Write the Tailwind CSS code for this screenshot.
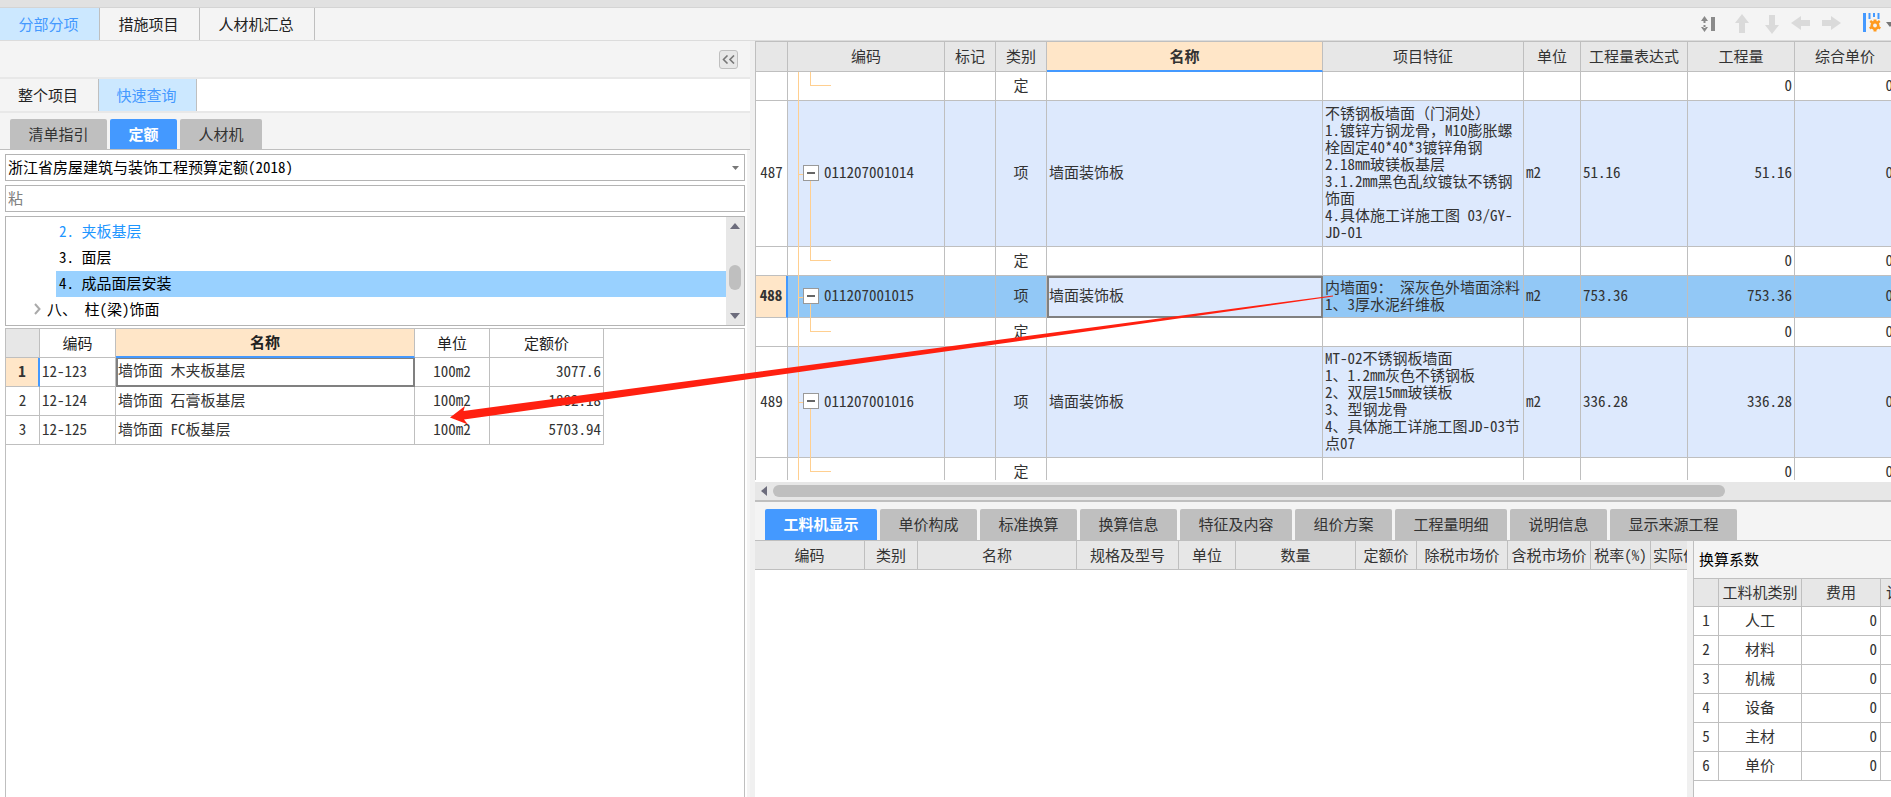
<!DOCTYPE html>
<html lang="zh-CN">
<head>
<meta charset="utf-8">
<title>分部分项 - 定额查询</title>
<script src="https://cdn.jsdelivr.net/npm/@tailwindcss/browser@4"></script>
</head>
<body class="relative flex h-screen flex-col overflow-hidden bg-white font-['Noto_Sans_CJK_SC',sans-serif] text-[15px] leading-[17px] text-[#333] [font-feature-settings:'hwid']">

<header class="shrink-0">
  <div class="h-[8px] border-b border-[#d4d4d4] bg-[#e1e1e1]"></div>
  <div class="flex h-[33px] items-stretch justify-between border-b border-[#dcdcdc] bg-[#f4f4f4]">
    <nav class="flex [&>button]:pr-[2px] [&>button]:pb-[2px]">
      <button class="w-[100px] border-r border-[#bfbfbf] bg-[#cce8ff] text-[#4499ff]">分部分项</button>
      <button class="w-[100px] border-r border-[#bfbfbf] text-[#222]">措施项目</button>
      <button class="w-[115px] border-r border-[#bfbfbf] text-[#222]">人材机汇总</button>
    </nav>
    <div class="flex items-center text-[#dadada]">
      <button aria-label="行高" class="mr-[19px]"><svg width="15" height="18" viewBox="0 0 15 18"><path d="M3.500 1 L7 6 H0Z M3.500 17 L7 12 H0Z M2.500 5h2v3h-2z M2.500 10h2v3h-2z M10 2h4v14h-4z" fill="#8a8a8a"/></svg></button>
      <button aria-label="上移" class="mr-[16px]"><svg width="14" height="20" viewBox="0 0 14 20"><path d="M7 0L14 9H10V19H4V9H0Z" fill="currentColor"/></svg></button>
      <button aria-label="下移" class="mr-[12px]"><svg width="14" height="20" viewBox="0 0 14 20"><path d="M7 20L0 11H4V1H10V11H14Z" fill="currentColor"/></svg></button>
      <button aria-label="左移" class="mr-[12px]"><svg width="19" height="16" viewBox="0 0 19 16"><path d="M0 7L10 0V4H19V10H10V14Z" fill="currentColor"/></svg></button>
      <button aria-label="右移" class="mr-[22px]"><svg width="19" height="16" viewBox="0 0 19 16"><path d="M19 7L9 0V4H0V10H9V14Z" fill="currentColor"/></svg></button>
      <button aria-label="列设置" class="mr-[5px] pb-[2px]"><svg width="18" height="20" viewBox="0 0 18 20"><path d="M0 0h3v19H0z M5.500 0h2v6h-2z M10 0h2v4h-2z M14.500 0h2v6h-2z" fill="#4499ff"/><g fill="#ff9a1f"><circle cx="12" cy="12.500" r="4.500"/><path d="M10.500 6.500h3v12h-3z M6.500 9l1.500-2 10 7.500-1.500 2z M17.500 9L16 7 6 14.500l1.500 2z"/></g><circle cx="12" cy="12.500" r="1.900" fill="#f4f4f4"/></svg></button>
      <button aria-label="更多" class="w-[5px] overflow-hidden"><svg class="max-w-none" width="8" height="5" viewBox="0 0 8 5"><path d="M0 0H8L4 5Z" fill="#777"/></svg></button>
    </div>
  </div>
</header>

<div class="flex min-h-0 flex-1">

  <aside class="flex w-[750px] shrink-0 flex-col">
    <div class="flex h-[38px] shrink-0 items-center justify-end border-b-2 border-[#e8e8e8] bg-[#f4f4f4] pr-[12px]">
      <button aria-label="收起" class="flex size-[19px] items-center justify-center rounded-[3px] border border-[#bfbfbf] bg-[#e7e7e7]"><svg width="13" height="9" viewBox="0 0 13 9" fill="none" stroke="#777" stroke-width="1.600"><path d="M5.500 .5L1.500 4.500l4 4M12 .5L8 4.500l4 4"/></svg></button>
    </div>
    <nav class="flex h-[34px] shrink-0 border-b-2 border-[#e8e8e8] [&>button]:pr-[2px] [&>button]:pb-[2px]">
      <button class="w-[99px] border-r border-[#bfbfbf] bg-[#f4f4f4] text-[#222]">整个项目</button>
      <button class="w-[98px] border-r border-[#bfbfbf] bg-[#cce8ff] text-[#4499ff]">快速查询</button>
    </nav>
    <nav class="flex h-[37px] shrink-0 items-end gap-[3px] border-b border-[#bfbfbf] bg-[#f4f4f4] pl-[10px] [&>button]:pb-[2px]">
      <button class="h-[30px] w-[97px] rounded-t-[2px] bg-[#bfbfbf]">清单指引</button>
      <button class="h-[30px] w-[67px] rounded-t-[2px] bg-[#4499ff] font-bold text-white">定额</button>
      <button class="h-[30px] w-[82px] rounded-t-[2px] bg-[#bfbfbf]">人材机</button>
    </nav>

    <div class="flex min-h-0 flex-1 bg-[#f4f4f4]">
      <div class="flex w-[747px] flex-col bg-white pt-[4px] pr-[2px] pl-[5px]">
        <div class="relative mb-[4px] flex shrink-0">
          <select aria-label="定额库" class="h-[27px] w-full appearance-none border border-[#b4b4b4] bg-white pb-[2px] pl-[2px] text-black"><option>浙江省房屋建筑与装饰工程预算定额(2018)</option></select>
          <svg class="pointer-events-none absolute top-[12px] right-[6px]" width="7" height="4" viewBox="0 0 7 4"><path d="M0 0H7L3.500 4Z" fill="#777"/></svg>
        </div>
        <input aria-label="搜索" value="粘" class="mb-[4px] h-[27px] shrink-0 border border-[#b4b4b4] pb-[2px] pl-[2px] text-[#808080]">

        <div class="flex h-[110px] shrink-0 border border-[#b4b4b4]">
          <ul class="flex-1 pt-[2px] text-black [&>li]:pb-[3px]">
            <li class="flex h-[26px] items-center pl-[53px] text-[#1e96ff]"><span class="whitespace-pre">2. 夹板基层</span></li>
            <li class="flex h-[26px] items-center pl-[53px]"><span class="whitespace-pre">3. 面层</span></li>
            <li class="ml-[50px] flex h-[26px] items-center bg-[#99d1ff] pl-[3px]"><span class="whitespace-pre">4. 成品面层安装</span></li>
            <li class="flex h-[26px] items-center gap-[6px] pl-[28px]"><svg width="7" height="12" viewBox="0 0 7 12" fill="none" stroke="#aaa" stroke-width="2"><path d="M1 1l4.500 5L1 11"/></svg><span>八、 柱(梁)饰面</span></li>
          </ul>
          <div class="flex w-[18px] flex-col items-center bg-[#e7e7e7] pt-[6px] pb-[6px]">
            <svg width="10" height="6" viewBox="0 0 10 6"><path d="M0 6L5 0l5 6Z" fill="#6c6c7c"/></svg>
            <div class="mt-[36px] h-[25px] w-[12px] rounded-full bg-[#bfbfbf]"></div>
            <svg class="mt-auto" width="10" height="6" viewBox="0 0 10 6"><path d="M0 0h10L5 6Z" fill="#6c6c7c"/></svg>
          </div>
        </div>

        <div class="mt-[2px] min-h-0 flex-1 border-x border-t border-[#bfbfbf]">
          <table class="w-[598px] table-fixed border-separate border-spacing-0 [&_td]:border-r [&_td]:border-b [&_td]:border-[#bfbfbf] [&_td]:px-[2px] [&_td]:pb-[4px] [&_th]:border-r [&_th]:border-b [&_th]:border-[#bfbfbf] [&_th]:pb-[2px]">
            <colgroup><col class="w-[34px]"><col class="w-[76px]"><col class="w-[299px]"><col class="w-[75px]"><col class="w-[114px]"></colgroup>
            <thead>
              <tr class="h-[29px] font-normal text-[#222]"><th class="bg-[#e7e7e7]"></th><th class="font-normal">编码</th><th class="border-b-2! border-b-[#4499ff]! bg-[#ffe6c8] font-bold">名称</th><th class="font-normal">单位</th><th class="font-normal">定额价</th></tr>
            </thead>
            <tbody>
              <tr class="h-[29px]"><td class="border-r-2! border-r-[#4499ff]! bg-[#ffe6c8] text-center font-bold">1</td><td>12-123</td><td class="border-r-2! border-b-2! border-[#808080]! shadow-[inset_2px_1px_0_#808080]">墙饰面 木夹板基层</td><td class="text-center">100m2</td><td class="text-right">3077.6</td></tr>
              <tr class="h-[29px]"><td class="text-center">2</td><td>12-124</td><td>墙饰面 石膏板基层</td><td class="text-center">100m2</td><td class="text-right">1882.18</td></tr>
              <tr class="h-[29px]"><td class="text-center">3</td><td>12-125</td><td>墙饰面 FC板基层</td><td class="text-center">100m2</td><td class="text-right">5703.94</td></tr>
            </tbody>
          </table>
        </div>
      </div>
    </div>
  </aside>

  <div class="w-[5px] shrink-0 bg-[#f0f0f0]"></div>

  <main class="flex min-w-0 flex-1 flex-col">
    <div class="h-[439px] shrink-0 overflow-hidden border-t border-l border-[#bfbfbf]">
      <table class="w-[1140px] table-fixed border-separate border-spacing-0 [&_td]:border-r [&_td]:border-b [&_td]:border-[#bfbfbf] [&_td]:px-[2px] [&_td]:pb-[4px] [&_th]:border-r [&_th]:border-b [&_th]:border-[#bfbfbf] [&_th]:pb-[2px]">
        <colgroup><col class="w-[32px]"><col class="w-[157px]"><col class="w-[51px]"><col class="w-[51px]"><col class="w-[276px]"><col class="w-[201px]"><col class="w-[57px]"><col class="w-[107px]"><col class="w-[107px]"><col class="w-[101px]"></colgroup>
        <thead>
          <tr class="h-[30px] bg-[#e7e7e7]"><th></th><th class="font-normal">编码</th><th class="font-normal">标记</th><th class="font-normal">类别</th><th class="border-b-2! border-b-[#4499ff]! bg-[#ffe6c8] font-bold">名称</th><th class="font-normal">项目特征</th><th class="font-normal">单位</th><th class="font-normal">工程量表达式</th><th class="font-normal">工程量</th><th class="font-normal">综合单价</th></tr>
        </thead>
        <tbody>
          <tr class="h-[29px]"><td></td>
            <td class="relative"><i class="absolute top-0 -bottom-px left-[10px] w-px bg-[#ffcf90]"></i><i class="absolute top-0 bottom-1/2 left-[22px] w-[21px] border-b border-l border-[#ffcf90]"></i></td>
            <td></td><td class="text-center">定</td><td></td><td></td><td></td><td></td><td class="text-right">0</td><td class="text-right">0</td></tr>
          <tr class="h-[146px] bg-[#dde9fd]"><td class="bg-white text-center">487</td>
            <td class="relative pb-[2px]!"><i class="absolute top-0 -bottom-px left-[10px] w-px bg-[#ffcf90]"></i><i class="absolute top-1/2 left-[11px] h-px w-[5px] bg-[#ffcf90]"></i><i class="absolute top-1/2 -bottom-px left-[22px] w-px bg-[#ffcf90]"></i><div class="relative flex items-center gap-[5px] pl-[13px]"><button aria-label="折叠" class="flex size-[16px] items-center justify-center border border-[#999] bg-white"><span class="h-[2px] w-[8px] bg-[#666]"></span></button><span class="pb-[2px]">011207001014</span></div></td>
            <td></td><td class="text-center">项</td><td>墙面装饰板</td>
            <td class="whitespace-nowrap">不锈钢板墙面<span class="[font-feature-settings:normal]">（门洞处）</span><br>1.镀锌方钢龙骨<span class="[font-feature-settings:normal]">，</span>M10膨胀螺<br>栓固定40*40*3镀锌角钢<br>2.18mm玻镁板基层<br>3.1.2mm黑色乱纹镀钛不锈钢<br>饰面<br>4.具体施工详施工图 03/GY-<br>JD-01</td>
            <td>m2</td><td>51.16</td><td class="text-right">51.16</td><td class="text-right">0</td></tr>
          <tr class="h-[29px]"><td></td>
            <td class="relative"><i class="absolute top-0 -bottom-px left-[10px] w-px bg-[#ffcf90]"></i><i class="absolute top-0 bottom-1/2 left-[22px] w-[21px] border-b border-l border-[#ffcf90]"></i></td>
            <td></td><td class="text-center">定</td><td></td><td></td><td></td><td></td><td class="text-right">0</td><td class="text-right">0</td></tr>
          <tr class="h-[42px] bg-[#92c8f6]"><td class="border-r-2! border-r-[#4499ff]! bg-[#ffe6c8] text-center font-bold">488</td>
            <td class="relative pb-[2px]!"><i class="absolute top-0 -bottom-px left-[10px] w-px bg-[#ffcf90]"></i><i class="absolute top-1/2 left-[11px] h-px w-[5px] bg-[#ffcf90]"></i><i class="absolute top-1/2 -bottom-px left-[22px] w-px bg-[#ffcf90]"></i><div class="relative flex items-center gap-[5px] pl-[13px]"><button aria-label="折叠" class="flex size-[16px] items-center justify-center border border-[#999] bg-white"><span class="h-[2px] w-[8px] bg-[#666]"></span></button><span class="pb-[2px]">011207001015</span></div></td>
            <td></td><td class="text-center">项</td><td class="border-r-2! border-b-2! border-[#808080]! bg-[#dde9fd] shadow-[inset_2px_2px_0_#808080]">墙面装饰板</td>
            <td class="whitespace-nowrap">内墙面9<span class="[font-feature-settings:normal]">：</span> 深灰色外墙面涂料<br>1、3厚水泥纤维板</td>
            <td>m2</td><td>753.36</td><td class="text-right">753.36</td><td class="text-right">0</td></tr>
          <tr class="h-[29px]"><td></td>
            <td class="relative"><i class="absolute top-0 -bottom-px left-[10px] w-px bg-[#ffcf90]"></i><i class="absolute top-0 bottom-1/2 left-[22px] w-[21px] border-b border-l border-[#ffcf90]"></i></td>
            <td></td><td class="text-center">定</td><td></td><td></td><td></td><td></td><td class="text-right">0</td><td class="text-right">0</td></tr>
          <tr class="h-[111px] bg-[#dde9fd]"><td class="bg-white text-center">489</td>
            <td class="relative pb-[2px]!"><i class="absolute top-0 -bottom-px left-[10px] w-px bg-[#ffcf90]"></i><i class="absolute top-1/2 left-[11px] h-px w-[5px] bg-[#ffcf90]"></i><i class="absolute top-1/2 -bottom-px left-[22px] w-px bg-[#ffcf90]"></i><div class="relative flex items-center gap-[5px] pl-[13px]"><button aria-label="折叠" class="flex size-[16px] items-center justify-center border border-[#999] bg-white"><span class="h-[2px] w-[8px] bg-[#666]"></span></button><span class="pb-[2px]">011207001016</span></div></td>
            <td></td><td class="text-center">项</td><td>墙面装饰板</td>
            <td class="whitespace-nowrap">MT-02不锈钢板墙面<br>1、1.2mm灰色不锈钢板<br>2、双层15mm玻镁板<br>3、型钢龙骨<br>4、具体施工详施工图JD-03节<br>点07</td>
            <td>m2</td><td>336.28</td><td class="text-right">336.28</td><td class="text-right">0</td></tr>
          <tr class="h-[29px]"><td></td>
            <td class="relative"><i class="absolute top-0 -bottom-px left-[10px] w-px bg-[#ffcf90]"></i><i class="absolute top-0 bottom-1/2 left-[22px] w-[21px] border-b border-l border-[#ffcf90]"></i></td>
            <td></td><td class="text-center">定</td><td></td><td></td><td></td><td></td><td class="text-right">0</td><td class="text-right">0</td></tr>
        </tbody>
      </table>
    </div>

    <div class="mt-[2px] flex h-[20px] shrink-0 items-center border-b-2 border-[#bfbfbf] bg-[#e7e7e7] pl-[6px]">
      <svg width="6" height="10" viewBox="0 0 6 10"><path d="M6 0v10L0 5Z" fill="#6c6c7c"/></svg>
      <div class="mr-[166px] ml-[6px] h-[12px] flex-1 rounded-full bg-[#bfbfbf]"></div>
    </div>

    <nav class="flex h-[39px] shrink-0 items-end gap-[3px] border-b border-[#bfbfbf] bg-[#f4f4f4] pl-[10px] [&>button]:h-[31px] [&>button]:shrink-0 [&>button]:rounded-t-[2px] [&>button]:pb-[2px]">
      <button class="w-[112px] bg-[#4499ff] font-bold text-white">工料机显示</button>
      <button class="w-[97px] bg-[#bfbfbf]">单价构成</button>
      <button class="w-[97px] bg-[#bfbfbf]">标准换算</button>
      <button class="w-[97px] bg-[#bfbfbf]">换算信息</button>
      <button class="w-[112px] bg-[#bfbfbf]">特征及内容</button>
      <button class="w-[97px] bg-[#bfbfbf]">组价方案</button>
      <button class="w-[112px] bg-[#bfbfbf]">工程量明细</button>
      <button class="w-[97px] bg-[#bfbfbf]">说明信息</button>
      <button class="w-[127px] bg-[#bfbfbf]">显示来源工程</button>
    </nav>

    <div class="flex min-h-0 flex-1">
      <div class="min-w-0 flex-1 overflow-hidden">
        <table class="w-[968px] table-fixed border-separate border-spacing-0 [&_th]:border-r [&_th]:border-b [&_th]:border-[#bfbfbf] [&_th]:pb-[2px] [&_th]:font-normal [&_th]:whitespace-nowrap">
          <colgroup><col class="w-[110px]"><col class="w-[53px]"><col class="w-[159px]"><col class="w-[102px]"><col class="w-[57px]"><col class="w-[120px]"><col class="w-[61px]"><col class="w-[91px]"><col class="w-[83px]"><col class="w-[60px]"><col class="w-[72px]"></colgroup>
          <thead><tr class="h-[29px] bg-[#e7e7e7]"><th>编码</th><th>类别</th><th>名称</th><th>规格及型号</th><th>单位</th><th>数量</th><th>定额价</th><th>除税市场价</th><th>含税市场价</th><th>税率(%)</th><th class="text-left"><span class="pl-[2px]">实际价</span></th></tr></thead>
        </table>
      </div>
      <div class="w-[6px] shrink-0 bg-[#f0f0f0]"></div>
      <section class="w-[198px] shrink-0 overflow-hidden border-l border-[#bfbfbf]">
        <h2 class="flex h-[37px] items-center bg-[#f4f4f4] pb-[2px] pl-[5px] text-black">换算系数</h2>
        <table class="w-[261px] table-fixed border-separate border-spacing-0 border-t border-[#bfbfbf] [&_td]:border-r [&_td]:border-b [&_td]:border-[#bfbfbf] [&_td]:pb-[4px] [&_th]:border-r [&_th]:border-b [&_th]:border-[#bfbfbf] [&_th]:pb-[2px] [&_th]:font-normal [&_th]:whitespace-nowrap">
          <colgroup><col class="w-[25px]"><col class="w-[83px]"><col class="w-[79px]"><col class="w-[74px]"></colgroup>
          <thead><tr class="h-[28px] bg-[#e7e7e7]"><th></th><th>工料机类别</th><th>费用</th><th class="text-left"><span class="pl-[5px]">计算系数</span></th></tr></thead>
          <tbody class="text-center">
            <tr class="h-[29px]"><td>1</td><td>人工</td><td class="pr-[3px] text-right">0</td><td></td></tr>
            <tr class="h-[29px]"><td>2</td><td>材料</td><td class="pr-[3px] text-right">0</td><td></td></tr>
            <tr class="h-[29px]"><td>3</td><td>机械</td><td class="pr-[3px] text-right">0</td><td></td></tr>
            <tr class="h-[29px]"><td>4</td><td>设备</td><td class="pr-[3px] text-right">0</td><td></td></tr>
            <tr class="h-[29px]"><td>5</td><td>主材</td><td class="pr-[3px] text-right">0</td><td></td></tr>
            <tr class="h-[29px]"><td>6</td><td>单价</td><td class="pr-[3px] text-right">0</td><td></td></tr>
          </tbody>
        </table>
      </section>
    </div>
  </main>
</div>

<!-- Annotation arrow from the item description to the quota row -->
<svg class="pointer-events-none absolute top-[290px] left-[450px]" width="890" height="140" viewBox="450 290 890 140" aria-hidden="true">
  <path d="M450 417.500L465 406L463.500 411L1150 319.800L1333 295.500V296.500L1150 322.500L464 419.500L468 424.500Z" fill="#ff2010"/>
</svg>
</body>
</html>
